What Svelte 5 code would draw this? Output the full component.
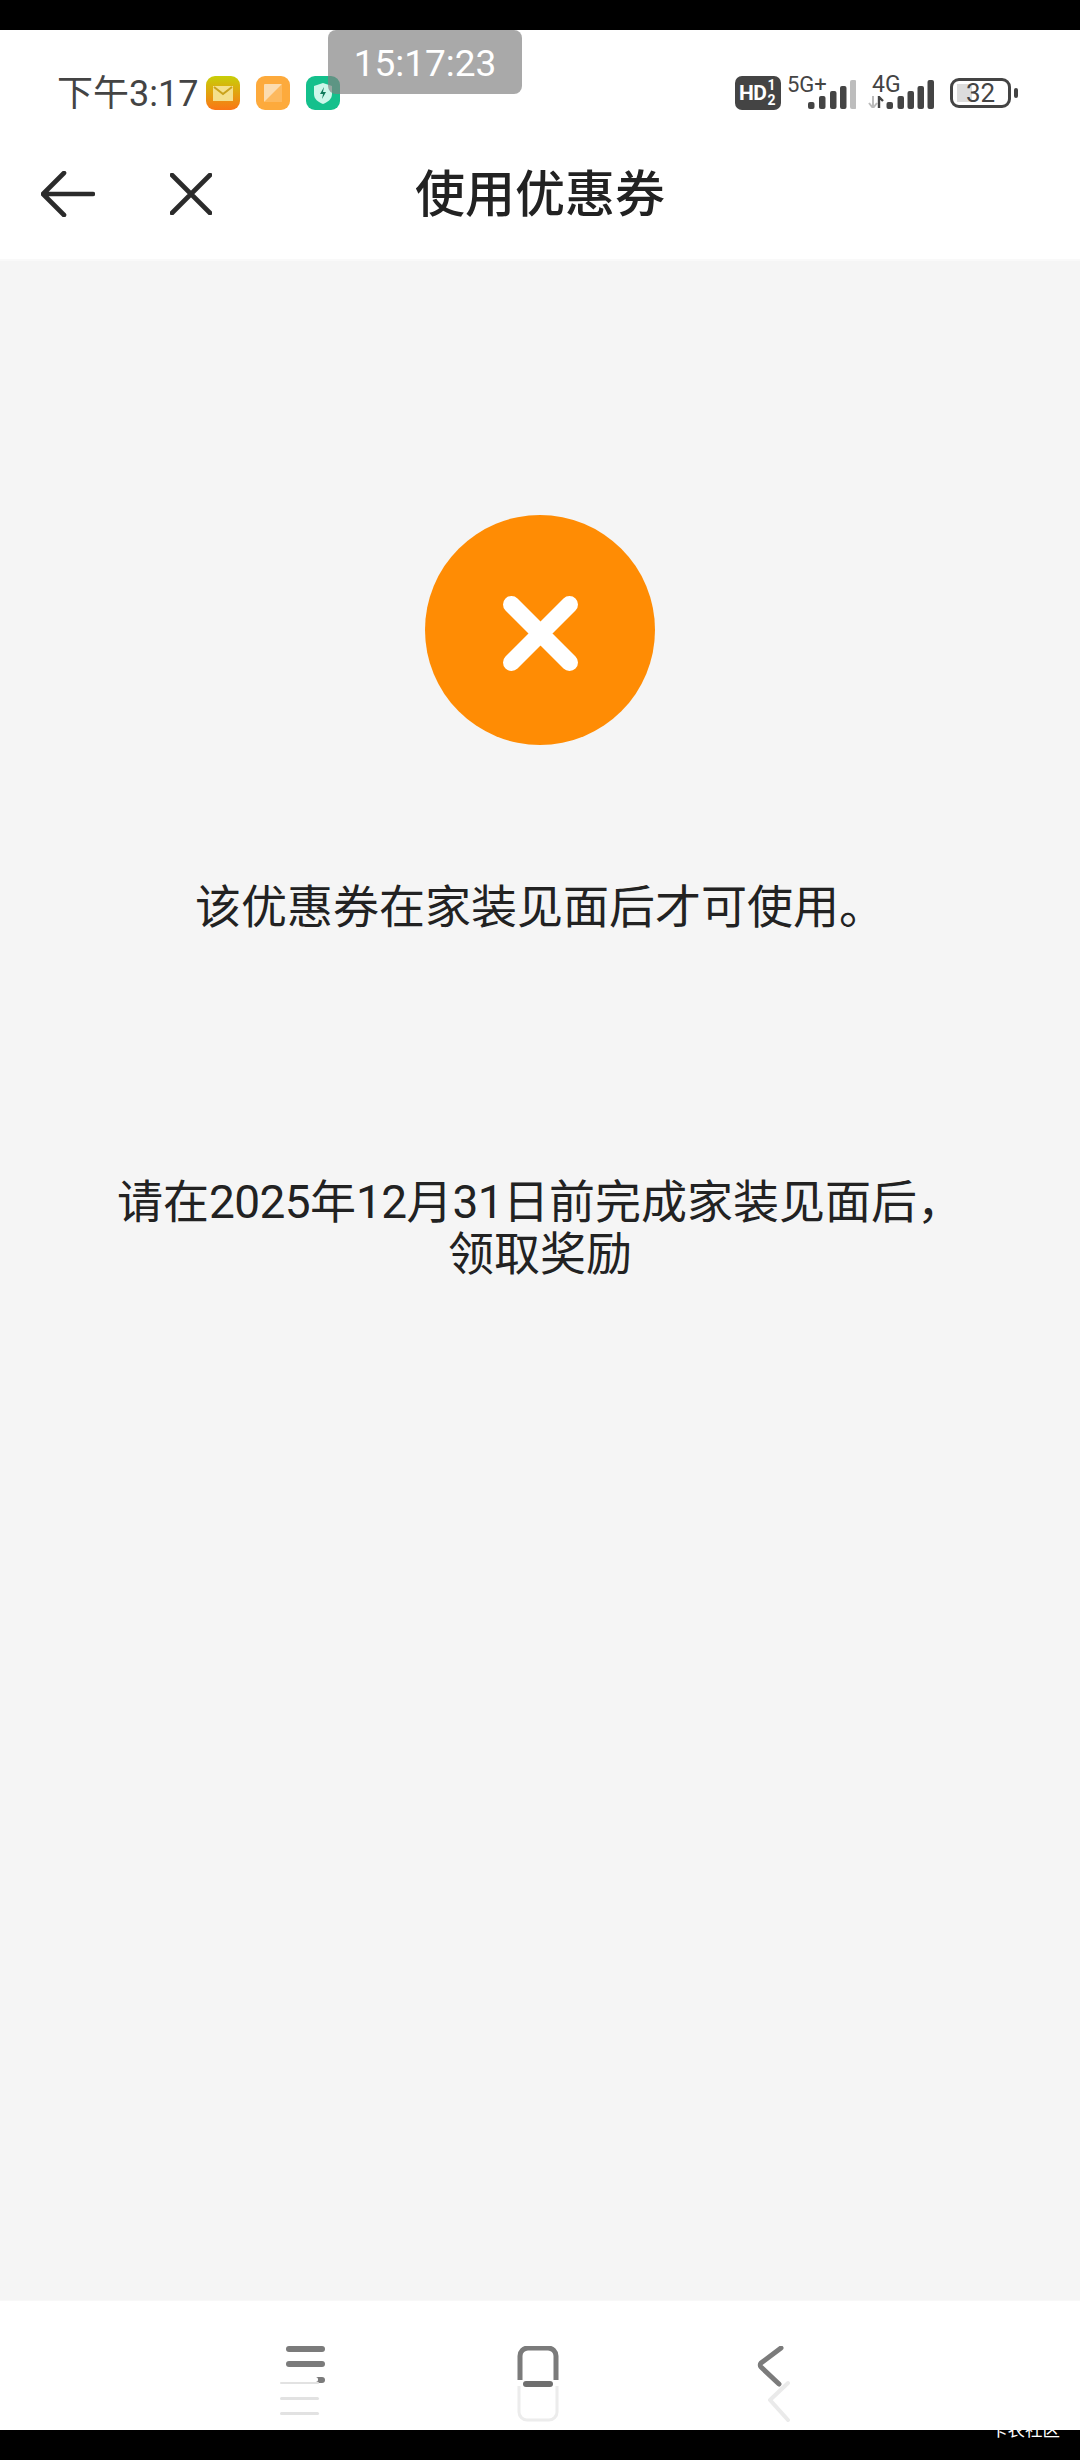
<script>
  const barsA = [
    { x: 0, h: 7 },
    { x: 11, h: 13 },
    { x: 22, h: 18 },
    { x: 32, h: 23 },
    { x: 42, h: 29, dim: true }
  ];
  const barsB = [
    { x: 0, h: 7 },
    { x: 11, h: 13 },
    { x: 21, h: 18 },
    { x: 31, h: 23 },
    { x: 41, h: 29 }
  ];
</script>

<div class="page">
  <div class="black"></div>

  <header class="top">
    <div class="status">
      <div class="left">
        <span class="clock">下午3:17</span>
        <svg class="app first" viewBox="0 0 34 34">
          <defs>
            <linearGradient id="mail" x1="0" y1="0" x2="0" y2="1">
              <stop offset="0" stop-color="#c8cf08" />
              <stop offset="1" stop-color="#fb7616" />
            </linearGradient>
          </defs>
          <rect width="34" height="34" rx="9" fill="url(#mail)" />
          <rect x="7" y="10" width="20" height="15" fill="#f4e08c" />
          <path d="M8 11l9 7 9-7" fill="none" stroke="#c9a21c" stroke-width="2" />
        </svg>
        <svg class="app" viewBox="0 0 34 34">
          <rect width="34" height="34" rx="9" fill="#fdaa3c" />
          <rect x="8" y="8" width="18" height="18" rx="1" fill="#fcdcb0" />
          <path d="M8 26L26 8v18z" fill="#fdb95e" />
        </svg>
        <svg class="app" viewBox="0 0 34 34">
          <rect width="34" height="34" rx="9" fill="#14c08c" />
          <path d="M17 7l9 3v8c0 5-4 8-9 10-5-2-9-5-9-10v-8z" fill="#cdf7ea" />
          <path d="M18 11l-4 7h3l-1 5 4-7h-3z" fill="#0f7a5a" />
        </svg>
      </div>

      <div class="right">
        <div class="hd">
          <span class="hd-text">HD</span>
          <span class="sims"><b>1</b><b>2</b></span>
        </div>
        <div class="net net-a">
          <span class="net-label">5G+</span>
          <svg class="bars" viewBox="0 0 48 29">
            {#each barsA as bar}
              <rect x={bar.x} y={29 - bar.h} width="6.5" height={bar.h} rx="2" fill={bar.dim ? "#bdbdbd" : "#444"} />
            {/each}
          </svg>
        </div>
        <div class="net net-b">
          <span class="net-label">4G</span>
          <svg class="arrows" viewBox="0 0 16 12">
            <path d="M5 0v12M1 7l4 5 4-5" fill="none" stroke="#bbb" stroke-width="2" />
            <path d="M11 12V1l4 4" fill="none" stroke="#444" stroke-width="2.4" />
          </svg>
          <svg class="bars" viewBox="0 0 47 29">
            {#each barsB as bar}
              <rect x={bar.x} y={29 - bar.h} width="6.5" height={bar.h} rx="2" fill="#444" />
            {/each}
          </svg>
        </div>
        <div class="battery">
          <div class="cell">
            <i class="level"></i>
            <span>32</span>
          </div>
          <i class="tip"></i>
        </div>
      </div>
    </div>

    <div class="toolbar">
      <svg class="back" viewBox="0 0 54 46">
        <path d="M52 23H3M23 2L2 23l21 21" fill="none" stroke="#2b2b2b" stroke-width="4.6" stroke-linecap="round" stroke-linejoin="round" />
      </svg>
      <svg class="close" viewBox="0 0 42 42">
        <path d="M2 2l38 38M40 2L2 40" fill="none" stroke="#2b2b2b" stroke-width="4.6" stroke-linecap="round" />
      </svg>
      <h1>使用优惠券</h1>
    </div>

    <div class="clock-tag">15:17:23</div>
  </header>

  <main>
    <div class="badge">
      <svg viewBox="0 0 75 75">
        <path d="M8.5 8.5l58 58M66.5 8.5l-58 58" fill="none" stroke="#fff" stroke-width="17" stroke-linecap="round" />
      </svg>
    </div>
    <p class="msg">该优惠券在家装见面后才可使用。</p>
    <p class="hint">请在<span class="num">2025</span>年<span class="num">12</span>月<span class="num">31</span>日前完成家装见面后，<br />领取奖励</p>
  </main>

  <nav>
    <svg class="nav-icon menu" viewBox="0 0 46 76">
      <g fill="#7b7b7b">
        <rect x="6" y="0" width="39" height="6" rx="3" />
        <rect x="6" y="15" width="39" height="6" rx="3" />
        <rect x="6" y="31" width="39" height="6" rx="3" />
      </g>
      <rect x="0" y="31" width="38" height="5" rx="2.5" fill="#fff" />
      <g fill="#e2e2e2">
        <rect x="0" y="36" width="39" height="2" rx="1" />
        <rect x="0" y="51" width="39" height="3" rx="1.5" />
        <rect x="0" y="66" width="39" height="3" rx="1.5" />
      </g>
    </svg>
    <svg class="nav-icon home" viewBox="0 0 42 76">
      <path d="M3 34V10a8 8 0 0 1 8-8h20a8 8 0 0 1 8 8v24" fill="none" stroke="#7b7b7b" stroke-width="5" />
      <path d="M2 40v26a8 8 0 0 0 8 8h22a8 8 0 0 0 8-8V40" fill="none" stroke="#ececec" stroke-width="3" />
      <rect x="6" y="35" width="30" height="6" rx="3" fill="#6f6f6f" />
    </svg>
    <svg class="nav-icon chevron" viewBox="0 0 34 76">
      <path d="M24 2L4 17c-1 1-1 3 0 4l18 17" fill="none" stroke="#7b7b7b" stroke-width="5" stroke-linecap="round" stroke-linejoin="round" />
      <path d="M31 37L13 54l18 20" fill="none" stroke="#eaeaea" stroke-width="4" stroke-linecap="round" stroke-linejoin="round" />
    </svg>
  </nav>

  <div class="black foot">
    <span class="mark">卡农社区</span>
  </div>
</div>

<style>
  :global(body) {
    margin: 0;
    background: #000;
  }

  .page {
    width: 1080px;
    height: 2460px;
    display: flex;
    flex-direction: column;
    font-family: "Noto Sans CJK SC", sans-serif;
    color: #222;
  }

  .black {
    height: 30px;
    flex: none;
    background: #000;
  }

  .top {
    position: relative;
    height: 229px;
    flex: none;
    background: #fff;
    border-bottom: 2px solid #f9f9f9;
  }

  .status {
    height: 80px;
    padding: 46px 62px 0 57px;
    box-sizing: border-box;
    display: flex;
    justify-content: space-between;
    align-items: flex-start;
  }

  .left {
    display: flex;
    align-items: center;
    height: 34px;
  }

  .clock {
    position: relative;
    top: 1px;
    font-family: Roboto, "Noto Sans CJK SC", sans-serif;
    font-size: 36px;
    line-height: 34px;
    color: #444;
    width: 149px;
    white-space: nowrap;
  }

  .app {
    width: 34px;
    height: 34px;
    margin-right: 16px;
  }

  .right {
    display: flex;
    align-items: flex-start;
  }

  .hd {
    width: 46px;
    height: 34px;
    background: #444;
    border-radius: 7px;
    color: #fff;
    display: flex;
    align-items: center;
    font-family: Roboto, sans-serif;
    font-weight: 700;
    box-sizing: border-box;
    padding-left: 4px;
    margin-right: 6px;
  }

  .hd-text {
    font-size: 21px;
    line-height: 20px;
    letter-spacing: -0.5px;
  }

  .sims {
    display: flex;
    flex-direction: column;
    font-size: 14px;
    line-height: 15px;
    margin-left: 1px;
  }

  .sims b {
    font-weight: 700;
  }

  .net {
    position: relative;
    height: 34px;
  }

  .net-a {
    width: 69px;
    margin-right: 12px;
  }

  .net-b {
    width: 66px;
    margin-right: 16px;
  }

  .net-label {
    position: absolute;
    left: 0;
    top: -1px;
    font-family: Roboto, sans-serif;
    font-size: 22px;
    line-height: 20px;
    color: #444;
  }

  .net-b .net-label {
    left: 4px;
    font-size: 23px;
  }

  .bars {
    position: absolute;
    right: 0;
    bottom: 1px;
    width: 48px;
    height: 29px;
  }

  .arrows {
    position: absolute;
    left: 0;
    bottom: 2px;
    width: 16px;
    height: 12px;
  }

  .battery {
    display: flex;
    align-items: center;
    height: 34px;
  }

  .cell {
    position: relative;
    width: 61px;
    height: 30px;
    box-sizing: border-box;
    border: 3px solid #444;
    border-radius: 9px;
    display: flex;
    align-items: center;
    justify-content: center;
    margin-right: 3px;
  }

  .cell span {
    position: relative;
    font-family: Roboto, sans-serif;
    font-size: 26px;
    line-height: 24px;
    color: #444;
  }

  .level {
    position: absolute;
    left: 4px;
    top: 3px;
    bottom: 3px;
    width: 28%;
    background: #dcdcdc;
  }

  .tip {
    width: 4px;
    height: 10px;
    border-radius: 2px;
    background: #444;
  }

  .toolbar {
    position: relative;
    height: 149px;
    padding-top: 57px;
    box-sizing: border-box;
  }

  .back {
    position: absolute;
    left: 41px;
    top: 61px;
    width: 54px;
    height: 46px;
  }

  .close {
    position: absolute;
    left: 170px;
    top: 63px;
    width: 42px;
    height: 42px;
  }

  h1 {
    margin: 0;
    text-align: center;
    font-size: 50px;
    line-height: 46px;
    font-weight: 500;
    color: #222;
  }

  .clock-tag {
    position: absolute;
    left: 328px;
    top: 0;
    width: 194px;
    height: 64px;
    background: rgba(128, 128, 128, 0.68);
    border-radius: 8px;
    color: #fff;
    font-family: Roboto, sans-serif;
    font-size: 37px;
    line-height: 68px;
    text-align: center;
  }

  main {
    flex: 1;
    background: #f5f5f5;
    display: flex;
    flex-direction: column;
    align-items: center;
    padding-top: 254px;
    font-family: Roboto, "Noto Sans CJK SC", sans-serif;
  }

  .badge {
    width: 230px;
    height: 230px;
    border-radius: 50%;
    background: #ff8c04;
    display: flex;
    align-items: center;
    justify-content: center;
  }

  .badge svg {
    width: 75px;
    height: 75px;
    margin-top: 6px;
  }

  .msg {
    margin: 130px 0 0;
    font-size: 46px;
    line-height: 64px;
    text-align: center;
  }

  .hint {
    margin: 237px 0 0;
    font-size: 46px;
    line-height: 52px;
    text-align: center;
  }

  .num {
    letter-spacing: -0.6px;
  }

  nav {
    height: 130px;
    flex: none;
    background: #fff;
    border-top: 1px solid #f8f8f8;
    box-sizing: border-box;
    display: grid;
    grid-template-columns: 326px 233px 232px;
    align-items: start;
    padding-top: 45px;
  }

  .nav-icon {
    height: 76px;
    justify-self: end;
  }

  .menu {
    width: 46px;
  }

  .home {
    width: 42px;
  }

  .chevron {
    width: 34px;
  }

  .foot {
    position: relative;
  }

  /* watermark straddles the nav edge, white on white above the black band */
  .mark {
    position: absolute;
    left: 990px;
    top: -11px;
    font-size: 17.5px;
    line-height: 20px;
    color: #fff;
    white-space: nowrap;
  }
</style>
